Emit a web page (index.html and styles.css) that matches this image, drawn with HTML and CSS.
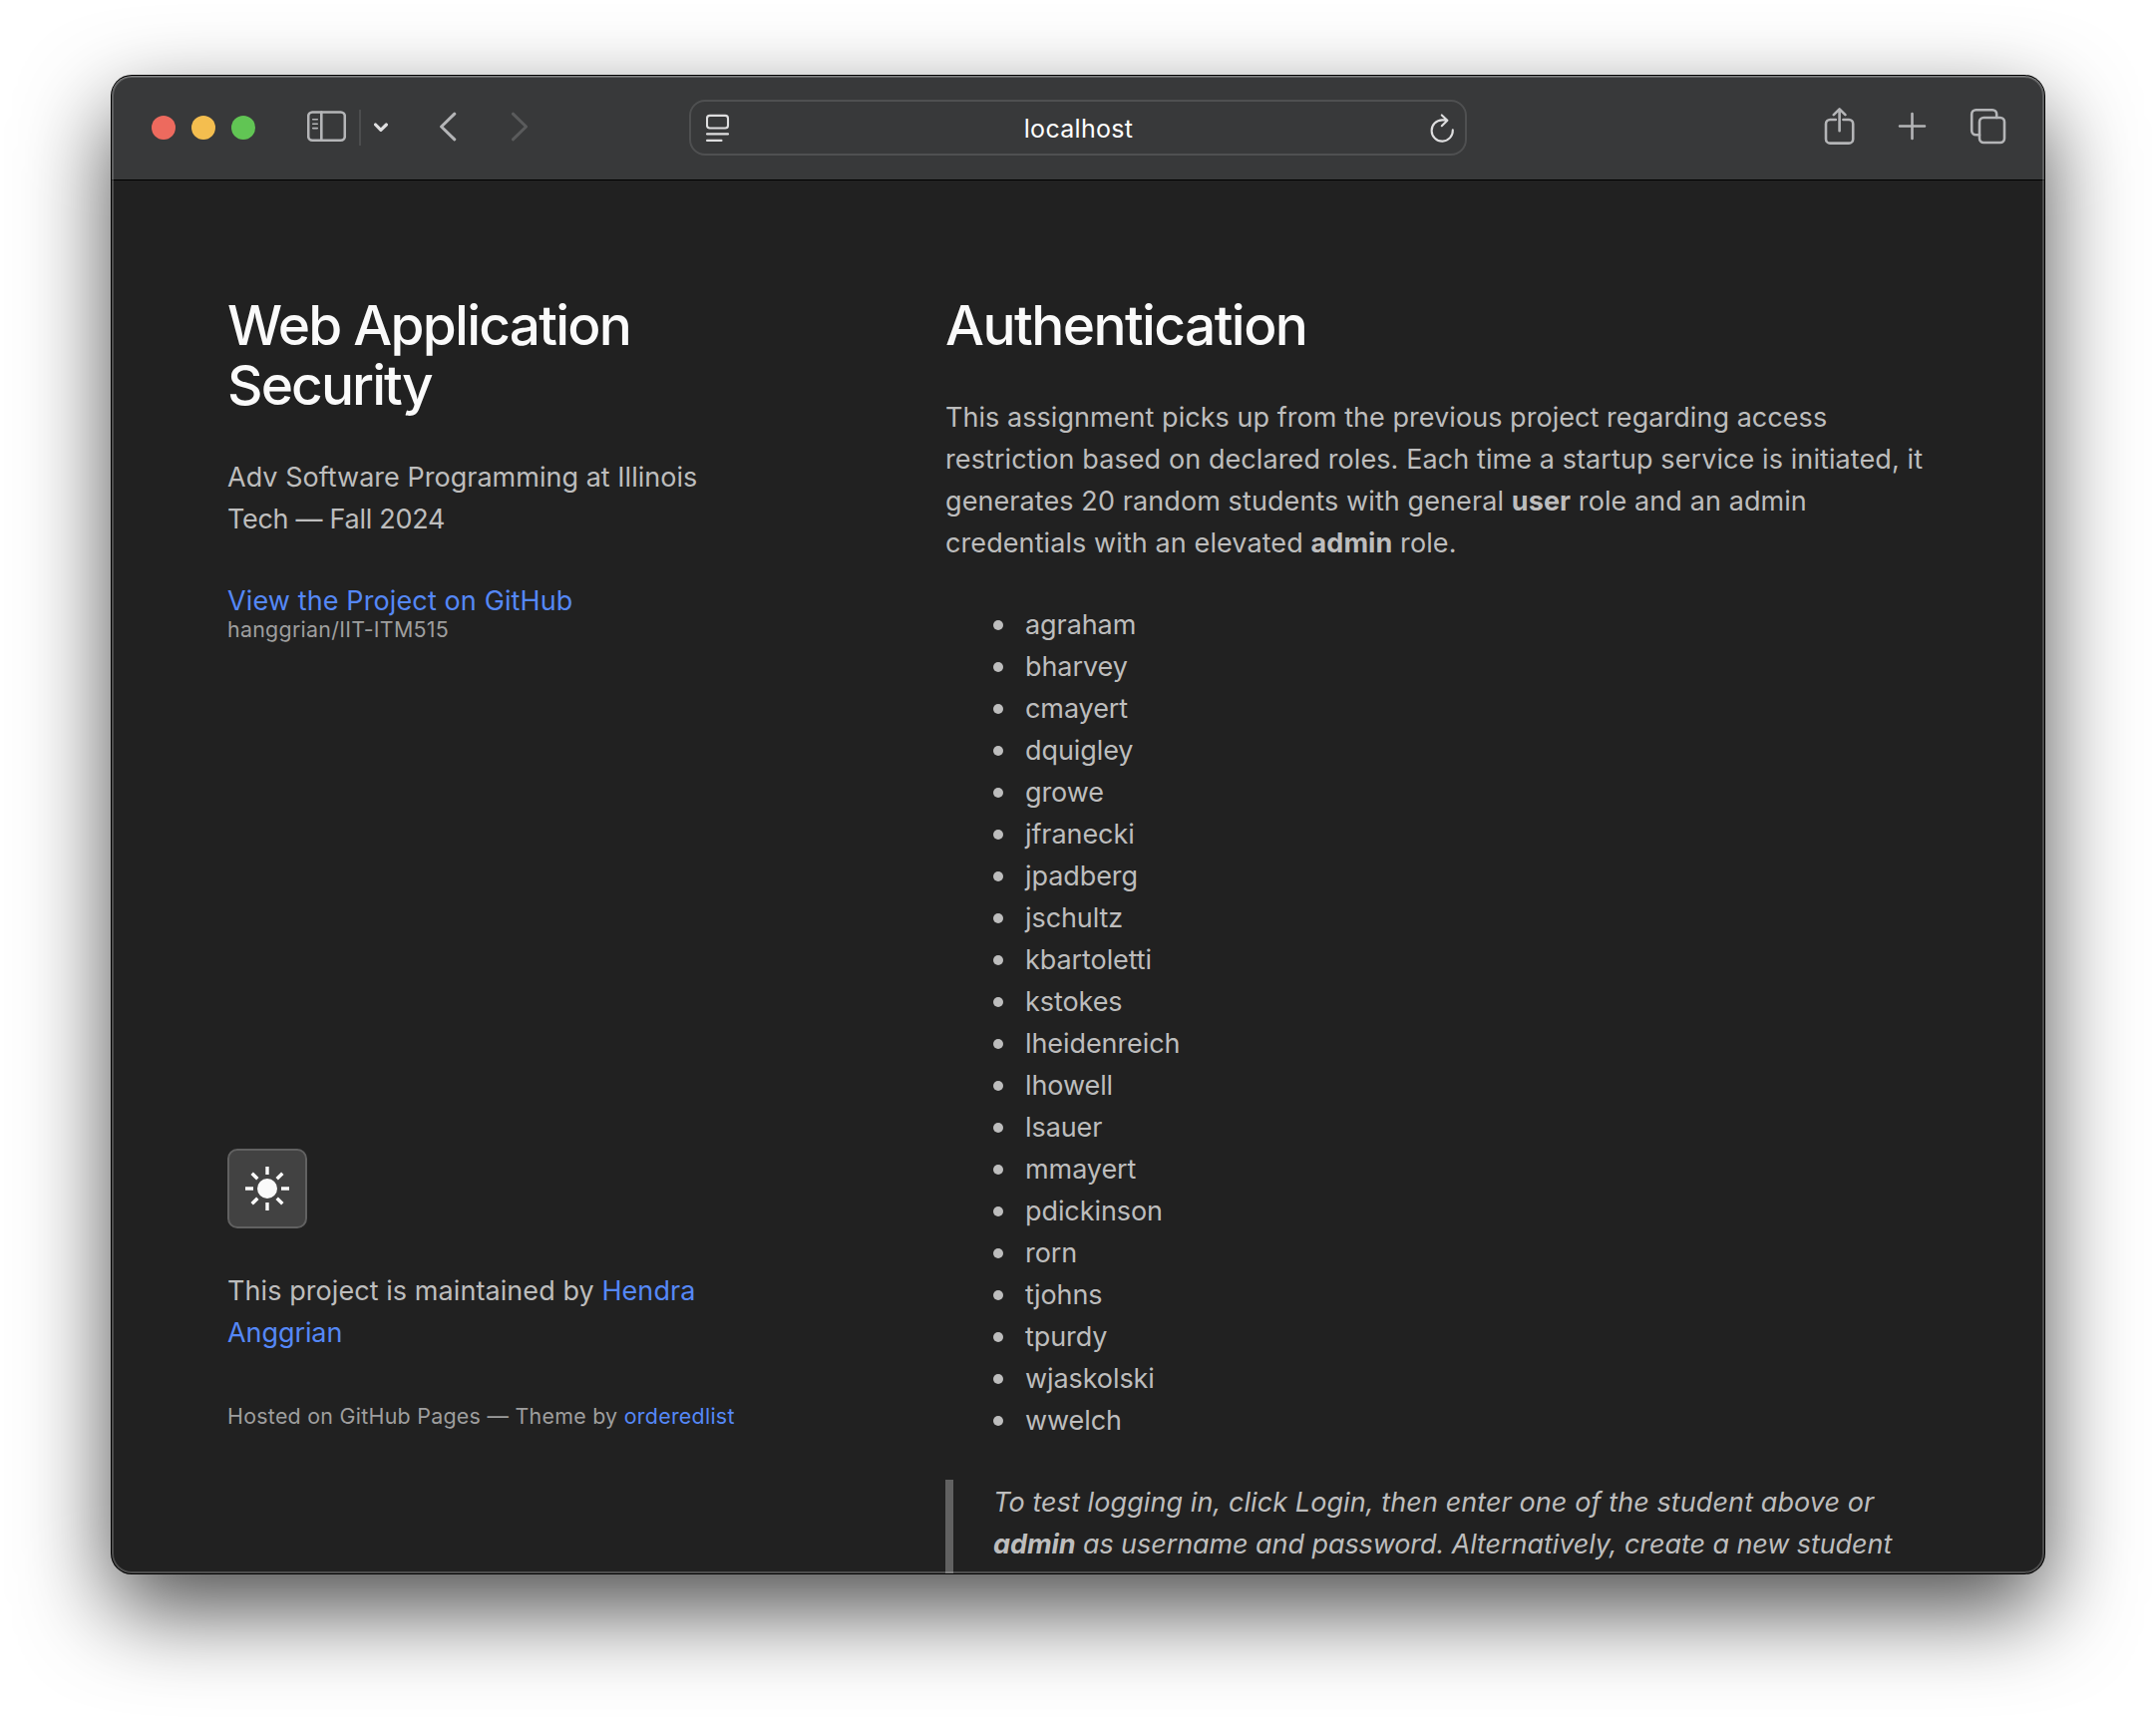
FILE: index.html
```html
<!DOCTYPE html>
<html lang="en">
<head>
<meta charset="utf-8">
<title>Web Application Security</title>
<link rel="stylesheet" href="styles.css">
</head>
<body>
<div class="window">
  <div class="toolbar">
    <div class="tools-left">
      <div class="lights"><span class="light close"></span><span class="light minimise"></span><span class="light expand"></span></div>
      <svg class="icon sidebar-icon" width="39" height="36" viewBox="308 110 39 36"><rect x="309.2" y="112.5" width="36.6" height="28.3" rx="4"/><path d="M322.3 112.5v28.3"/><path class="thin" d="M313.7 119.7h4.6M313.7 124.2h4.6M313.7 128.6h4.6"/></svg>
      <span class="divider"></span>
      <svg class="icon chevron" width="14" height="36" viewBox="375 110 14 36"><path d="M376.6 125l5.3 5.4 5.5-5.4"/></svg>
      <svg class="icon back" width="18" height="36" viewBox="441 110 18 36"><path d="M455.8 114.2L442.6 127l13.2 12.8"/></svg>
      <svg class="icon forward" width="18" height="36" viewBox="512 110 18 36"><path d="M514.4 114.2L527.6 127l-13.2 12.8"/></svg>
    </div>
    <div class="address">
      <svg class="icon bright" width="24" height="32" viewBox="708 112 24 32"><rect x="709" y="115.9" width="21" height="12.6" rx="2.8"/><path d="M709 134.4h21M709 140.9h14.5"/></svg>
      <span class="host">localhost</span>
      <svg class="icon bright reload" width="26" height="32" viewBox="1434 112 26 32"><path d="M1456.8 130.4a10.6 10.6 0 1 1-10.6-10h4.6M1445.8 115.4l5.6 5.4-5.6 5.4"/></svg>
    </div>
    <div class="tools-right">
      <svg class="icon" width="31" height="40" viewBox="1829 108 31 40"><path d="M1840.8 120h-5.6a4.2 4.2 0 0 0-4.2 4.2v15.2a4.2 4.2 0 0 0 4.2 4.2h18.8a4.2 4.2 0 0 0 4.2-4.2v-15.2a4.2 4.2 0 0 0-4.2-4.2h-5.6M1844.6 131.2v-21.6M1838.8 115.2l5.8-5.8 5.8 5.8"/></svg>
      <svg class="icon" width="29" height="36" viewBox="1903 110 29 36"><path d="M1905 126.5h25M1917.5 114v25"/></svg>
      <svg class="icon" width="37" height="40" viewBox="1975 108 37 40"><rect x="1985" y="118" width="25" height="25" rx="4.2"/><path d="M1985 135.2h-3.6a4.2 4.2 0 0 1-4.2-4.2v-16.6a4.2 4.2 0 0 1 4.2-4.2h16.6a4.2 4.2 0 0 1 4.2 4.2v3.6"/></svg>
    </div>
  </div>
  <div class="page">
    <div class="sidebar">
      <header>
        <h1>Web Application<br><span class="title-end">Security</span></h1>
        <p class="intro">Adv Software Programming at Illinois<br><span class="term">Tech — Fall 2024</span></p>
        <p class="view"><a href="#">View the Project on GitHub</a><small>hanggrian/IIT-ITM515</small></p>
      </header>
      <footer>
        <button class="theme" aria-label="Toggle theme"><svg width="48" height="48" viewBox="-24 -24 48 48"><circle r="10"/><path d="M0-22v8M0 14v8M-22 0h8M14 0h8M-15.3-15.3l5.6 5.6M9.7 9.7l5.6 5.6M-15.3 15.3l5.6-5.6M9.7-9.7l5.6-5.6"/></svg></button>
        <p class="maintained">This project is maintained by <a href="#">Hendra<br><span class="surname">Anggrian</span></a></p>
        <p class="hosted">Hosted on GitHub Pages — Theme by <a href="#">orderedlist</a></p>
      </footer>
    </div>
    <main>
      <h1 class="main-title">Authentication</h1>
      <p class="lead"><span class="first">This assignment picks up from the previous project regarding access</span><br>restriction based on declared roles. Each time a startup service is initiated, it<br>generates 20 random students with general <strong>user</strong> role and an admin<br>credentials with an elevated <strong>admin</strong> role.</p>
      <ul>
        <li>agraham</li>
        <li>bharvey</li>
        <li>cmayert</li>
        <li>dquigley</li>
        <li>growe</li>
        <li>jfranecki</li>
        <li>jpadberg</li>
        <li>jschultz</li>
        <li>kbartoletti</li>
        <li>kstokes</li>
        <li>lheidenreich</li>
        <li>lhowell</li>
        <li>lsauer</li>
        <li>mmayert</li>
        <li>pdickinson</li>
        <li>rorn</li>
        <li>tjohns</li>
        <li>tpurdy</li>
        <li>wjaskolski</li>
        <li>wwelch</li>
      </ul>
      <blockquote>To test logging in, click Login, then enter one of the student above or<br><span class="second"><strong>admin</strong> as username and password. Alternatively, create a new student</span></blockquote>
    </main>
  </div>
</div>
</body>
</html>
```
FILE: styles.css
```css
* { box-sizing: border-box; }

html, body { height: 100%; }

body {
  margin: 0;
  padding: 76px 112px 148px;
  overflow: hidden;
  background: #fff;
  font: 440 27px/42px Inter, "Liberation Sans", sans-serif;
  color: #bdbdbd;
}

.window {
  position: relative;
  display: flex;
  flex-direction: column;
  height: 1502px;
  overflow: hidden;
  border-radius: 20px;
  background: #212121;
  box-shadow: 0 0 0 1px #000, 0 36px 90px rgba(0, 0, 0, .7);
}

/* Light rim over the window edge */
.window::after {
  content: "";
  position: absolute;
  inset: 0;
  border-radius: 20px;
  box-shadow: inset 0 0 0 2px rgba(255, 255, 255, .2), inset 0 1px 0 rgba(255, 255, 255, .22);
  pointer-events: none;
}

.toolbar {
  display: grid;
  grid-template-columns: 1fr 780px 1fr;
  align-items: center;
  flex: none;
  height: 105px;
  border-bottom: 1px solid #000;
  background: #38393a;
}

.tools-left, .tools-right { display: flex; align-items: center; }
.tools-left { padding-left: 40px; }
.tools-right { justify-content: flex-end; gap: 43px; padding-right: 38px; }

.lights { display: flex; gap: 16px; }
.light { width: 24px; height: 24px; border-radius: 50%; }
.close { background: #ed6a5e; }
.minimise { background: #f4be4f; }
.expand { background: #61c554; }

.icon {
  display: block;
  flex: none;
  fill: none;
  stroke: #b4b5b7;
  stroke-width: 2.6;
  stroke-linecap: round;
  stroke-linejoin: round;
}
.thin { stroke-width: 1.6; }
.sidebar-icon { margin-left: 52px; }
.divider { width: 2px; height: 36px; margin: 0 13px; background: #4c4d4e; }
.chevron { stroke: #dfdfe0; stroke-width: 3.2; }
.back { margin-left: 52px; stroke-width: 3; }
.forward { margin-left: 53px; stroke: #5a5b5c; stroke-width: 3; }
.bright { stroke: #dededf; stroke-width: 2.1; }

.address {
  display: flex;
  align-items: center;
  justify-content: space-between;
  height: 56px;
  padding: 0 9px 0 15px;
  border: 2px solid #4f5051;
  border-radius: 16px;
}
.host { padding: 1px 3px 0 0; font-size: 25px; line-height: 30px; letter-spacing: .3px; color: #fff; }

.page {
  display: flex;
  flex: 1;
  min-height: 0;
  gap: 180px;
  padding: 115px 100px 0 116px;
}

.sidebar {
  display: flex;
  flex-direction: column;
  justify-content: space-between;
  width: 540px;
  padding-bottom: 137px;
  white-space: nowrap;
}

h1, p, ul, blockquote { margin: 0; }

h1 {
  margin-bottom: 42px;
  font-size: 55px;
  line-height: 60px;
  font-weight: 520;
  letter-spacing: -1.76px;
  color: #fafafa;
}
.title-end { letter-spacing: -1.9px; }
.main-title { letter-spacing: -1.57px; }

a { color: #5588f7; text-decoration: none; }

.intro { letter-spacing: .02px; }
.term { letter-spacing: -.29px; }

.view { display: flex; flex-direction: column; margin-top: 46px; line-height: 30px; letter-spacing: .12px; }
small, .hosted { font-size: 21.4px; letter-spacing: .27px; color: #9e9e9e; }
small { line-height: 26px; }

.theme {
  display: flex;
  align-items: center;
  justify-content: center;
  width: 80px;
  height: 80px;
  margin-bottom: 42px;
  padding: 0;
  border: 2px solid #616161;
  border-radius: 10px;
  background: #424242;
}
.theme svg { fill: #fafafa; stroke: #fafafa; }
.theme circle { stroke: none; }
.theme path { fill: none; stroke-width: 3.4; }

.maintained { margin-bottom: 41px; letter-spacing: .07px; }
.surname { letter-spacing: -.08px; }

main { flex: 1; white-space: nowrap; }
.lead { margin-bottom: 40px; letter-spacing: .09px; }
.first { letter-spacing: .05px; }

ul { padding: 0; list-style: none; letter-spacing: -.08px; }
li { display: flex; align-items: center; gap: 22px; padding-left: 48px; }
li::before { content: ""; width: 10px; height: 10px; border-radius: 50%; background: currentColor; }

blockquote {
  height: 200px;
  margin-top: 38px;
  padding: 2px 0 0 40px;
  border-left: 8px solid #616161;
  font-style: italic;
  letter-spacing: .08px;
}
.second { letter-spacing: -.08px; }
```
